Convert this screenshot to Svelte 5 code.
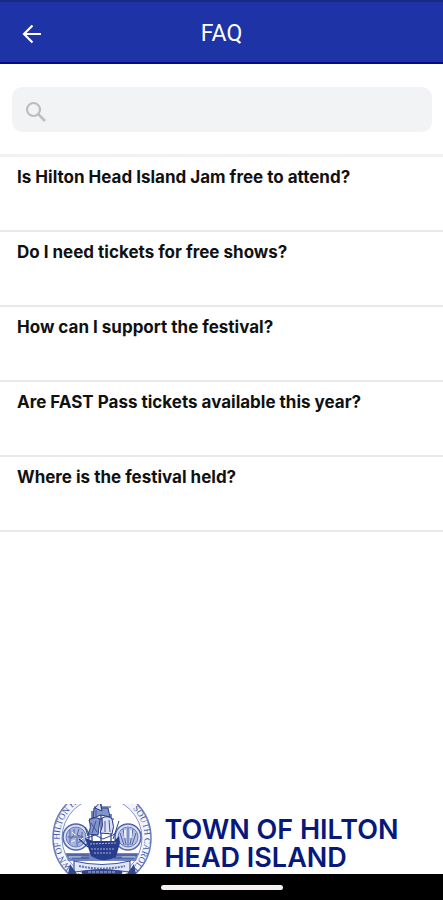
<script lang="ts">
  type Question = {
    id: number,
    title: string
  }

  let search: string = $state("");

  const questions: Question[] = [
    { id: 1, title: "Is Hilton Head Island Jam free to attend?" },
    { id: 2, title: "Do I need tickets for free shows?" },
    { id: 3, title: "How can I support the festival?" },
    { id: 4, title: "Are FAST Pass tickets available this year?" },
    { id: 5, title: "Where is the festival held?" }
  ];

  let visible = $derived(
    questions.filter(q => q.title.toLowerCase().includes(search.trim().toLowerCase()))
  );
</script>

<div class="screen">
  <header class="topbar">
    <button class="back" type="button" aria-label="Back">
      <svg viewBox="0 0 24 24" width="24" height="24" fill="none" stroke="#fff" stroke-width="2.2">
        <path d="M21 12H4.500M12.500 3.500L4 12l8.500 8.500" />
      </svg>
    </button>
    <h1>FAQ</h1>
  </header>

  <main>
    <label class="search">
      <svg viewBox="0 0 24 24" width="24" height="24" fill="none" stroke="#bdbdbd">
        <circle cx="9.500" cy="9.500" r="6.500" stroke-width="2.200" />
        <path d="M14.200 14.200L21 21" stroke-width="2.600" />
      </svg>
      <input type="text" aria-label="Search" bind:value={search} />
    </label>

    <ul class="questions">
      {#each visible as q (q.id)}
        <li><button type="button">{q.title}</button></li>
      {/each}
    </ul>
  </main>

  <footer class="sponsor">
    <svg class="seal" viewBox="0 16 100 70" width="100" height="70" aria-hidden="true">
      <defs>
        <path id="ring" d="M50 92.500A42.500 42.500 0 0 1 50 7.500A42.500 42.500 0 0 1 50 92.500" />
      </defs>
      <circle cx="50" cy="50" r="49" fill="#f3f5fc" stroke="#6b7dbb" stroke-width="1.500" />
      <circle cx="50" cy="50" r="40" fill="#fff" stroke="#8492c6" />
      <text class="motto"><textPath href="#ring" startOffset="22">TOWN OF HILTON HEAD ISLAND · SOUTH CAROLINA</textPath></text>

      <!-- sea -->
      <path d="M13 65H87L84 73H16z" fill="#7385bd" />
      <path d="M15 67h22M20 70h17M64 67h21M62 70h20" stroke="#304795" stroke-width="1.200" />
      <path d="M17 69h12M70 69h13" stroke="#dfe5f5" stroke-width="0.800" />

      <!-- left medallion -->
      <g stroke="#5265ad" fill="none">
        <circle cx="24" cy="49" r="13" fill="#dce2f3" stroke-width="1.500" />
        <circle cx="24" cy="49" r="10" fill="#a8b5da" stroke-width="0.800" />
        <path d="M18 42v13M22 41v6l-3 4M27 41l-2 6 6 2M16 49h15M25 50v8M30 44v8l-4 3" />
        <path d="M20 44l3 3M28 53l3-3M19 54l4-2" stroke="#fff" />
      </g>

      <!-- right medallion -->
      <g stroke="#5265ad" fill="none">
        <circle cx="76" cy="49" r="13" fill="#dce2f3" stroke-width="1.500" />
        <circle cx="76" cy="49" r="10" fill="#b5c0e0" stroke-width="0.800" />
        <path d="M76 40v18M71 41l3 16M81 41l-3 16M68 45l4 12M84 45l-4 12" />
        <path d="M73 42v8M79 42v8" stroke="#fff" stroke-width="1.500" />
      </g>

      <!-- ship -->
      <path d="M49 13V65M40 23V61M59 26V62M36 59L27 51M42 19h17M37 31h25" stroke="#203785" stroke-width="1.200" />
      <path d="M42 20h14l2 9-9-2-8 3zM37 32q6-4 11-1l-2 16-10-1q4-6 1-14z" fill="#8394c6" stroke="#24398c" />
      <path d="M50 30q6-3 10 1 3 8 0 15l-12-1q4-7 2-15zM43 20l5-6 2 9z" fill="#dbe1f2" stroke="#24398c" />
      <path d="M39 35l6 9M44 33l-4 12M53 33v11M57 32l1 12M44 22v6" stroke="#4054a0" />
      <path d="M33 50l8 3h21l5-5 1 7-4 14q-12 7-25-1z" fill="#293d8f" />
      <path d="M38 56l26-1M39 61h24M42 65h18" stroke="#a6b1d7" stroke-dasharray="2 1" />
      <path d="M35 50l8-3 8 4 12-5M36 48l-3-9M61 51l6-18" stroke="#30468f" fill="none" />

      <!-- ribbon -->
      <path d="M22 73q28 7 56 0v11q-28-4-56 0z" fill="#e2e7f5" stroke="#4055a0" stroke-width="1.200" />
      <path d="M27 78q23 5 46 0" fill="none" stroke="#6073b2" stroke-width="2" stroke-dasharray="2 1" />
      <path d="M18 76l7 10H16zM82 76l-7 10h9zM30 83q20-4 40 0v5H30z" fill="#30468f" />
      <path d="M36 84h28" stroke="#b5c0e0" stroke-dasharray="3 1" />
    </svg>
    <p>TOWN OF HILTON<br />HEAD ISLAND</p>
  </footer>

  <div class="navbar"><span class="handle"></span></div>
</div>

<style>
  :global(body) {
    margin: 0;
    background: #fff;
  }

  .screen {
    display: flex;
    flex-direction: column;
    min-height: 100vh;
    font-family: Inter, "Liberation Sans", sans-serif;
    color: #111;
  }

  .topbar {
    display: grid;
    grid-template-columns: 40px 1fr 40px;
    align-items: center;
    box-sizing: border-box;
    height: 64px;
    padding: 4px 12px 0;
    background: #1d33a6;
    border-top: 2px solid #182b83;
    border-bottom: 2px solid #020b8b;
  }

  .topbar h1 {
    margin: 0;
    font-family: Roboto, sans-serif;
    font-size: 23px;
    font-weight: 400;
    line-height: 28px;
    text-align: center;
    color: #fff;
  }

  button {
    padding: 0;
    border: 0;
    background: none;
    font: inherit;
    color: inherit;
    cursor: pointer;
  }

  .back {
    display: flex;
    align-items: center;
    justify-content: center;
    height: 40px;
  }

  .search {
    display: flex;
    align-items: center;
    gap: 12px;
    box-sizing: border-box;
    height: 45px;
    margin: 23px 11px 22px 12px;
    padding: 4px 12px 0;
    border-radius: 10px;
    background: #f2f3f5;
  }

  .search input {
    flex: 1;
    min-width: 0;
    padding: 0;
    border: 0;
    outline: 0;
    background: none;
    font: inherit;
    font-size: 17px;
  }

  .questions {
    margin: 0;
    padding: 0;
    border-top: 3px solid #f1f1f1;
    list-style: none;
  }

  .questions li {
    border-bottom: 2px solid #e9e9e9;
  }

  .questions button {
    display: block;
    width: 100%;
    padding: 8px 17px 41px;
    font-size: 17px;
    font-weight: 700;
    line-height: 24px;
    text-align: left;
  }

  .sponsor {
    display: flex;
    justify-content: center;
    gap: 12px;
    margin-top: auto;
    padding-left: 8px;
  }

  .seal {
    flex: none;
  }

  .motto {
    font-family: "Liberation Serif", serif;
    font-size: 9px;
    fill: #4056a4;
  }

  .sponsor p {
    margin: 12px 0 0;
    font-size: 27px;
    font-weight: 600;
    line-height: 28px;
    white-space: nowrap;
    color: #07187d;
  }

  .navbar {
    display: flex;
    align-items: center;
    justify-content: center;
    height: 26px;
    background: #000;
  }

  .handle {
    width: 122px;
    height: 5px;
    border-radius: 3px;
    background: #f5f1f3;
  }
</style>
